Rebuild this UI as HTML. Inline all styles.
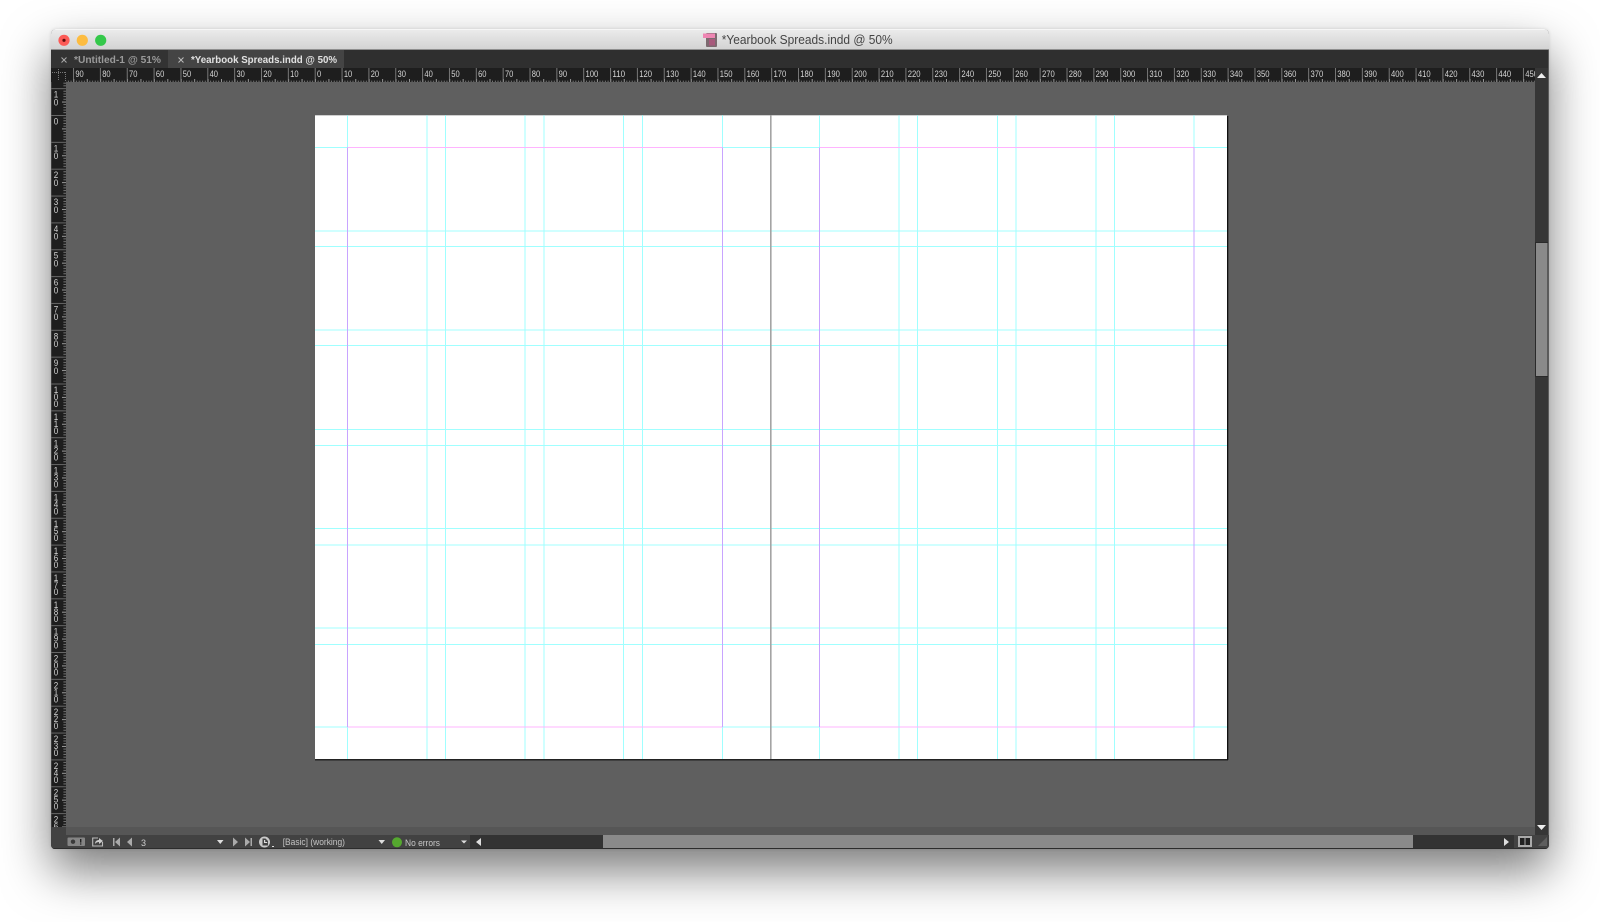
<!DOCTYPE html>
<html><head><meta charset="utf-8"><title>Yearbook Spreads.indd</title>
<style>
html,body{margin:0;padding:0;width:1600px;height:922px;overflow:hidden;background:#fff}
#win{position:absolute;left:51px;top:29px;width:1498px;height:820px;border-radius:5px 5px 4px 4px;box-shadow:0 22px 48px rgba(0,0,0,.52),0 0 3px rgba(0,0,0,.12);background:#424242}
svg{position:absolute;left:0;top:0}
text{font-family:"Liberation Sans",sans-serif}
</style></head><body>
<div id="win"></div>
<svg width="1600" height="922" viewBox="0 0 1600 922">
<defs>
<linearGradient id="tb" x1="0" y1="0" x2="0" y2="1"><stop offset="0" stop-color="#ececec"/><stop offset="1" stop-color="#d2d2d2"/></linearGradient>
<pattern id="hs" patternUnits="userSpaceOnUse" x="315" y="78" width="26.85" height="4">
<rect x="0" y="1" width="1" height="3" fill="#888"/><rect x="2.7" y="2.6" width=".8" height="1.4" fill="#888"/><rect x="5.4" y="2.6" width=".8" height="1.4" fill="#888"/><rect x="8.05" y="2.6" width=".8" height="1.4" fill="#888"/><rect x="10.75" y="2.6" width=".8" height="1.4" fill="#888"/><rect x="13.4" y="1" width="1" height="3" fill="#999"/><rect x="16.1" y="2.6" width=".8" height="1.4" fill="#888"/><rect x="18.8" y="2.6" width=".8" height="1.4" fill="#888"/><rect x="21.5" y="2.6" width=".8" height="1.4" fill="#888"/><rect x="24.15" y="2.6" width=".8" height="1.4" fill="#888"/>
</pattern>
<pattern id="vs" patternUnits="userSpaceOnUse" x="62" y="115" width="4" height="26.85">
<rect x="1.4" y="2.7" width="2.6" height=".8" fill="#888"/><rect x="1.4" y="5.4" width="2.6" height=".8" fill="#888"/><rect x="1.4" y="8.05" width="2.6" height=".8" fill="#888"/><rect x="1.4" y="10.75" width="2.6" height=".8" fill="#888"/><rect x="0" y="13.4" width="4" height="1" fill="#999"/><rect x="1.4" y="16.1" width="2.6" height=".8" fill="#888"/><rect x="1.4" y="18.8" width="2.6" height=".8" fill="#888"/><rect x="1.4" y="21.5" width="2.6" height=".8" fill="#888"/><rect x="1.4" y="24.15" width="2.6" height=".8" fill="#888"/>
</pattern>
<pattern id="hl" patternUnits="userSpaceOnUse" x="314.7" y="68" width="26.85" height="14"><rect x="0" y="0" width="1" height="14" fill="#777"/></pattern>
<pattern id="vl" patternUnits="userSpaceOnUse" x="51" y="115" width="15" height="26.85"><rect x="0" y="0" width="15" height="1" fill="#666"/></pattern>
<clipPath id="hc"><rect x="66" y="68" width="1469" height="14"/></clipPath>
<clipPath id="vc"><rect x="51" y="82" width="15" height="745"/></clipPath>
<clipPath id="wc"><path d="M56 29H1544a5 5 0 0 1 5 5V845a4 4 0 0 1-4 4H55a4 4 0 0 1-4-4V34a5 5 0 0 1 5-5z"/></clipPath>
</defs>

<g clip-path="url(#wc)">
<!-- title bar -->
<rect x="51" y="29" width="1498" height="21" fill="url(#tb)"/>
<rect x="51" y="29" width="1498" height="1" fill="#f6f6f6"/>
<rect x="51" y="49" width="1498" height="1" fill="#8f8f8f"/>
<!-- tabs -->
<rect x="51" y="50" width="1498" height="18" fill="#2f2f2f"/>
<rect x="51" y="50" width="117" height="18" fill="#333"/>
<rect x="168" y="50" width="176" height="18" fill="#444"/>
<!-- pasteboard -->
<rect x="66" y="82" width="1469" height="745" fill="#5f5f5f"/>
<rect x="66" y="827" width="1469" height="8" fill="#565656"/>
<!-- scrollbar -->
<rect x="1535" y="68" width="14" height="767" fill="#363636"/>
<rect x="1535" y="242" width="13" height="135" fill="#2a2a2a"/>
<rect x="1536" y="243" width="11.500" height="133" fill="#8a8a8a"/>
<rect x="1548" y="50" width="1" height="799" fill="#5c5c5c"/>
<!-- rulers -->
<rect x="51" y="68" width="1484" height="14" fill="#1e1e1e"/>
<rect x="51" y="82" width="15" height="745" fill="#1e1e1e"/>
<rect x="51" y="82" width="1" height="745" fill="#3c3c3c"/>
<rect x="51" y="827" width="15" height="8" fill="#424242"/>
<rect x="66" y="68" width="1469" height="14" fill="url(#hl)"/>
<rect x="66" y="78" width="1469" height="4" fill="url(#hs)"/>
<rect x="51" y="82" width="15" height="745" fill="url(#vl)"/>
<rect x="62" y="82" width="4" height="745" fill="url(#vs)"/>
<path d="M52 72.5h13M58.5 69v12M65.5 72v10" stroke="#777" stroke-width="1" stroke-dasharray="1 1" fill="none"/>

<g clip-path="url(#hc)" fill="#d4d4d4" font-size="9">
<g transform="translate(-1 0)">
<text x="76.35" y="77" textLength="8.400" lengthAdjust="spacingAndGlyphs">90</text><text x="103.2" y="77" textLength="8.400" lengthAdjust="spacingAndGlyphs">80</text><text x="130.05" y="77" textLength="8.400" lengthAdjust="spacingAndGlyphs">70</text><text x="156.9" y="77" textLength="8.400" lengthAdjust="spacingAndGlyphs">60</text><text x="183.75" y="77" textLength="8.400" lengthAdjust="spacingAndGlyphs">50</text><text x="210.6" y="77" textLength="8.400" lengthAdjust="spacingAndGlyphs">40</text><text x="237.45" y="77" textLength="8.400" lengthAdjust="spacingAndGlyphs">30</text><text x="264.3" y="77" textLength="8.400" lengthAdjust="spacingAndGlyphs">20</text><text x="291.15" y="77" textLength="8.400" lengthAdjust="spacingAndGlyphs">10</text><text x="318" y="77" textLength="4.200" lengthAdjust="spacingAndGlyphs">0</text><text x="344.85" y="77" textLength="8.400" lengthAdjust="spacingAndGlyphs">10</text><text x="371.7" y="77" textLength="8.400" lengthAdjust="spacingAndGlyphs">20</text><text x="398.55" y="77" textLength="8.400" lengthAdjust="spacingAndGlyphs">30</text><text x="425.4" y="77" textLength="8.400" lengthAdjust="spacingAndGlyphs">40</text><text x="452.25" y="77" textLength="8.400" lengthAdjust="spacingAndGlyphs">50</text><text x="479.1" y="77" textLength="8.400" lengthAdjust="spacingAndGlyphs">60</text><text x="505.95" y="77" textLength="8.400" lengthAdjust="spacingAndGlyphs">70</text><text x="532.8" y="77" textLength="8.400" lengthAdjust="spacingAndGlyphs">80</text><text x="559.65" y="77" textLength="8.400" lengthAdjust="spacingAndGlyphs">90</text><text x="586.5" y="77" textLength="12.800" lengthAdjust="spacingAndGlyphs">100</text><text x="613.35" y="77" textLength="12.800" lengthAdjust="spacingAndGlyphs">110</text><text x="640.2" y="77" textLength="12.800" lengthAdjust="spacingAndGlyphs">120</text><text x="667.05" y="77" textLength="12.800" lengthAdjust="spacingAndGlyphs">130</text><text x="693.9" y="77" textLength="12.800" lengthAdjust="spacingAndGlyphs">140</text><text x="720.75" y="77" textLength="12.800" lengthAdjust="spacingAndGlyphs">150</text><text x="747.6" y="77" textLength="12.800" lengthAdjust="spacingAndGlyphs">160</text><text x="774.45" y="77" textLength="12.800" lengthAdjust="spacingAndGlyphs">170</text><text x="801.3" y="77" textLength="12.800" lengthAdjust="spacingAndGlyphs">180</text><text x="828.15" y="77" textLength="12.800" lengthAdjust="spacingAndGlyphs">190</text><text x="855" y="77" textLength="12.800" lengthAdjust="spacingAndGlyphs">200</text><text x="881.85" y="77" textLength="12.800" lengthAdjust="spacingAndGlyphs">210</text><text x="908.7" y="77" textLength="12.800" lengthAdjust="spacingAndGlyphs">220</text><text x="935.55" y="77" textLength="12.800" lengthAdjust="spacingAndGlyphs">230</text><text x="962.4" y="77" textLength="12.800" lengthAdjust="spacingAndGlyphs">240</text><text x="989.25" y="77" textLength="12.800" lengthAdjust="spacingAndGlyphs">250</text><text x="1016.1" y="77" textLength="12.800" lengthAdjust="spacingAndGlyphs">260</text><text x="1042.95" y="77" textLength="12.800" lengthAdjust="spacingAndGlyphs">270</text><text x="1069.8" y="77" textLength="12.800" lengthAdjust="spacingAndGlyphs">280</text><text x="1096.65" y="77" textLength="12.800" lengthAdjust="spacingAndGlyphs">290</text><text x="1123.5" y="77" textLength="12.800" lengthAdjust="spacingAndGlyphs">300</text><text x="1150.35" y="77" textLength="12.800" lengthAdjust="spacingAndGlyphs">310</text><text x="1177.2" y="77" textLength="12.800" lengthAdjust="spacingAndGlyphs">320</text><text x="1204.05" y="77" textLength="12.800" lengthAdjust="spacingAndGlyphs">330</text><text x="1230.9" y="77" textLength="12.800" lengthAdjust="spacingAndGlyphs">340</text><text x="1257.75" y="77" textLength="12.800" lengthAdjust="spacingAndGlyphs">350</text><text x="1284.6" y="77" textLength="12.800" lengthAdjust="spacingAndGlyphs">360</text><text x="1311.45" y="77" textLength="12.800" lengthAdjust="spacingAndGlyphs">370</text><text x="1338.3" y="77" textLength="12.800" lengthAdjust="spacingAndGlyphs">380</text><text x="1365.15" y="77" textLength="12.800" lengthAdjust="spacingAndGlyphs">390</text><text x="1392" y="77" textLength="12.800" lengthAdjust="spacingAndGlyphs">400</text><text x="1418.85" y="77" textLength="12.800" lengthAdjust="spacingAndGlyphs">410</text><text x="1445.7" y="77" textLength="12.800" lengthAdjust="spacingAndGlyphs">420</text><text x="1472.55" y="77" textLength="12.800" lengthAdjust="spacingAndGlyphs">430</text><text x="1499.4" y="77" textLength="12.800" lengthAdjust="spacingAndGlyphs">440</text><text x="1526.25" y="77" textLength="12.800" lengthAdjust="spacingAndGlyphs">450</text>
</g></g>

<g clip-path="url(#vc)">
<g transform="translate(56 .5) scale(.85 1) translate(-56 0)" fill="#d4d4d4" font-size="9.5" text-anchor="middle">
<text y="97.15"><tspan x="56">1</tspan><tspan x="56" dy="7.8">0</tspan></text>
<text y="124"><tspan x="56">0</tspan></text>
<text y="150.85"><tspan x="56">1</tspan><tspan x="56" dy="7.8">0</tspan></text>
<text y="177.7"><tspan x="56">2</tspan><tspan x="56" dy="7.8">0</tspan></text>
<text y="204.55"><tspan x="56">3</tspan><tspan x="56" dy="7.8">0</tspan></text>
<text y="231.4"><tspan x="56">4</tspan><tspan x="56" dy="7.8">0</tspan></text>
<text y="258.25"><tspan x="56">5</tspan><tspan x="56" dy="7.8">0</tspan></text>
<text y="285.1"><tspan x="56">6</tspan><tspan x="56" dy="7.8">0</tspan></text>
<text y="311.95"><tspan x="56">7</tspan><tspan x="56" dy="7.8">0</tspan></text>
<text y="338.8"><tspan x="56">8</tspan><tspan x="56" dy="7.8">0</tspan></text>
<text y="365.65"><tspan x="56">9</tspan><tspan x="56" dy="7.8">0</tspan></text>
<text y="392.5"><tspan x="56">1</tspan><tspan x="56" dy="7">0</tspan><tspan x="56" dy="7">0</tspan></text>
<text y="419.35"><tspan x="56">1</tspan><tspan x="56" dy="7">1</tspan><tspan x="56" dy="7">0</tspan></text>
<text y="446.2"><tspan x="56">1</tspan><tspan x="56" dy="7">2</tspan><tspan x="56" dy="7">0</tspan></text>
<text y="473.05"><tspan x="56">1</tspan><tspan x="56" dy="7">3</tspan><tspan x="56" dy="7">0</tspan></text>
<text y="499.9"><tspan x="56">1</tspan><tspan x="56" dy="7">4</tspan><tspan x="56" dy="7">0</tspan></text>
<text y="526.75"><tspan x="56">1</tspan><tspan x="56" dy="7">5</tspan><tspan x="56" dy="7">0</tspan></text>
<text y="553.6"><tspan x="56">1</tspan><tspan x="56" dy="7">6</tspan><tspan x="56" dy="7">0</tspan></text>
<text y="580.45"><tspan x="56">1</tspan><tspan x="56" dy="7">7</tspan><tspan x="56" dy="7">0</tspan></text>
<text y="607.3"><tspan x="56">1</tspan><tspan x="56" dy="7">8</tspan><tspan x="56" dy="7">0</tspan></text>
<text y="634.15"><tspan x="56">1</tspan><tspan x="56" dy="7">9</tspan><tspan x="56" dy="7">0</tspan></text>
<text y="661"><tspan x="56">2</tspan><tspan x="56" dy="7">0</tspan><tspan x="56" dy="7">0</tspan></text>
<text y="687.85"><tspan x="56">2</tspan><tspan x="56" dy="7">1</tspan><tspan x="56" dy="7">0</tspan></text>
<text y="714.7"><tspan x="56">2</tspan><tspan x="56" dy="7">2</tspan><tspan x="56" dy="7">0</tspan></text>
<text y="741.55"><tspan x="56">2</tspan><tspan x="56" dy="7">3</tspan><tspan x="56" dy="7">0</tspan></text>
<text y="768.4"><tspan x="56">2</tspan><tspan x="56" dy="7">4</tspan><tspan x="56" dy="7">0</tspan></text>
<text y="795.25"><tspan x="56">2</tspan><tspan x="56" dy="7">5</tspan><tspan x="56" dy="7">0</tspan></text>
<text y="822.1"><tspan x="56">2</tspan><tspan x="56" dy="7">6</tspan><tspan x="56" dy="7">0</tspan></text>
</g></g>

<!-- status bar -->
<rect x="51" y="835" width="1484" height="14" fill="#424242"/>
<rect x="51" y="848" width="1498" height="1" fill="#2c2c2c"/>
<rect x="470" y="835" width="1044" height="13" fill="#333"/>
<rect x="603" y="835" width="810" height="13" fill="#8a8a8a"/>
<rect x="1514" y="835" width="35" height="13" fill="#424242"/>
</g>

<!-- title -->
<circle cx="64" cy="40.3" r="5.6" fill="#fc5b57"/><circle cx="64" cy="40.3" r="1.6" fill="#5b0d0b"/>
<circle cx="82.3" cy="40.3" r="5.6" fill="#fdbc40"/>
<circle cx="100.7" cy="40.3" r="5.6" fill="#34c84a"/>
<rect x="706" y="33" width="11" height="14" rx="1" fill="#7d6a70"/>
<rect x="703" y="33.500" width="12" height="4.500" fill="#ef86b3"/>
<rect x="709" y="39" width="6" height="6.500" fill="#a85a7c"/>
<text x="721.7" y="44" font-size="13" fill="#444" textLength="171" lengthAdjust="spacingAndGlyphs">*Yearbook Spreads.indd @ 50%</text>

<!-- tabs text -->
<path d="M61.5 57.5l5 5M66.5 57.5l-5 5" stroke="#aaa" stroke-width="1" fill="none"/>
<path d="M178.5 57.5l5 5M183.5 57.5l-5 5" stroke="#bbb" stroke-width="1" fill="none"/>
<text x="74" y="63" font-size="10.5" font-weight="bold" fill="#9a9a9a" textLength="87" lengthAdjust="spacingAndGlyphs">*Untitled-1 @ 51%</text>
<text x="191" y="63" font-size="10.5" font-weight="bold" fill="#e2e2e2" textLength="146" lengthAdjust="spacingAndGlyphs">*Yearbook Spreads.indd @ 50%</text>

<!-- page -->
<rect x="315" y="115.300" width="912" height="644.700" fill="#fff"/>
<g fill="none" stroke-width="1">
<g stroke="#a0ffff">
<path d="M347.5 115.300V760M427 115.300V760M445.500 115.300V760M525 115.300V760M544 115.300V760M623.500 115.300V760M642.500 115.300V760M722.500 115.300V760M819.500 115.300V760M899 115.300V760M917.500 115.300V760M997.500 115.300V760M1016 115.300V760M1096 115.300V760M1114.500 115.300V760M1194 115.300V760"/>
<path d="M315 147.500H1227M315 231H1227M315 246.500H1227M315 330H1227M315 345.500H1227M315 429.500H1227M315 445.500H1227M315 528.500H1227M315 545H1227M315 628H1227M315 644.500H1227M315 727H1227"/>
</g>
<g stroke="#ffb4ff"><path d="M347.500 147.500H722.500M819.500 147.500H1194M347.500 727H722.500M819.500 727H1194"/></g>
<g stroke="#c8a4ff"><path d="M347.500 147.500V727M722.500 147.500V727M819.500 147.500V727M1194 147.500V727"/></g>
</g>
<rect x="770" y="115.300" width="1.600" height="644.700" fill="#a4a4a4"/>
<rect x="315" y="759" width="913" height="1.500" fill="#222"/>
<rect x="1227" y="116" width="1.300" height="644" fill="#111"/>

<!-- scrollbar arrows -->
<path d="M1537 78l4.5-5 4.5 5z" fill="#eee"/>
<path d="M1537 825h9l-4.5 5z" fill="#eee"/>

<!-- status icons -->
<rect x="67.5" y="837.5" width="17.5" height="8.5" rx="1" fill="#858585"/>
<circle cx="73" cy="841.7" r="2.2" fill="#3a3a3a"/>
<rect x="80" y="839" width="1.4" height="3.6" fill="#222"/><rect x="80" y="843.4" width="1.4" height="1.2" fill="#222"/>
<path d="M98 838H92.700V846H102.500V842" fill="none" stroke="#bbb" stroke-width="1.100"/>
<path d="M95 844c0-3 2-4 4-4V838l4 3-4 3v-2c-1.600 0-3 .5-4 2z" fill="#ccc"/>
<rect x="113" y="838" width="1.500" height="8" fill="#aaa"/><path d="M120 837.500v9l-5-4.500z" fill="#aaa"/>
<path d="M132 837.500v9l-5-4.500z" fill="#aaa"/>
<text x="141" y="846" font-size="9" fill="#ccc">3</text>
<path d="M217 840h6.500l-3.250 4z" fill="#ddd"/>
<path d="M233 837.500v9l5-4.500z" fill="#aaa"/>
<path d="M245 837.500v9l5-4.500z" fill="#aaa"/><rect x="250.500" y="838" width="1.500" height="8" fill="#aaa"/>
<circle cx="264.500" cy="842" r="5.500" fill="#c8c8c8"/>
<path d="M262.500 838.500h3l2.500 2.500v4.500h-5.500z" fill="#424242"/><path d="M264 840h1.200v2h2v1h-3.200z" fill="#ddd"/>
<rect x="272" y="846" width="2" height="1" fill="#ddd"/>
<text x="282.700" y="845" font-size="9.500" fill="#c4c4c4" textLength="62.300" lengthAdjust="spacingAndGlyphs">[Basic] (working)</text>
<path d="M378.500 840h6.500l-3.250 4z" fill="#ddd"/>
<circle cx="397" cy="842.300" r="5" fill="#55a82f"/>
<text x="405" y="846" font-size="9.500" fill="#c8c8c8" textLength="35" lengthAdjust="spacingAndGlyphs">No errors</text>
<path d="M461 840.500h6l-3 3z" fill="#ddd"/>
<path d="M481 838v8l-5-4z" fill="#ddd"/>
<path d="M1504 838v8l5-4z" fill="#ddd"/>
<rect x="1518" y="836" width="14" height="11" fill="#aaa"/>
<rect x="1520" y="838" width="4.500" height="7" fill="#222"/><rect x="1525.500" y="838" width="4.500" height="7" fill="#222"/>
<path d="M1538 846h9v-9z" fill="#5e5e5e"/>
</svg>
</body></html>
